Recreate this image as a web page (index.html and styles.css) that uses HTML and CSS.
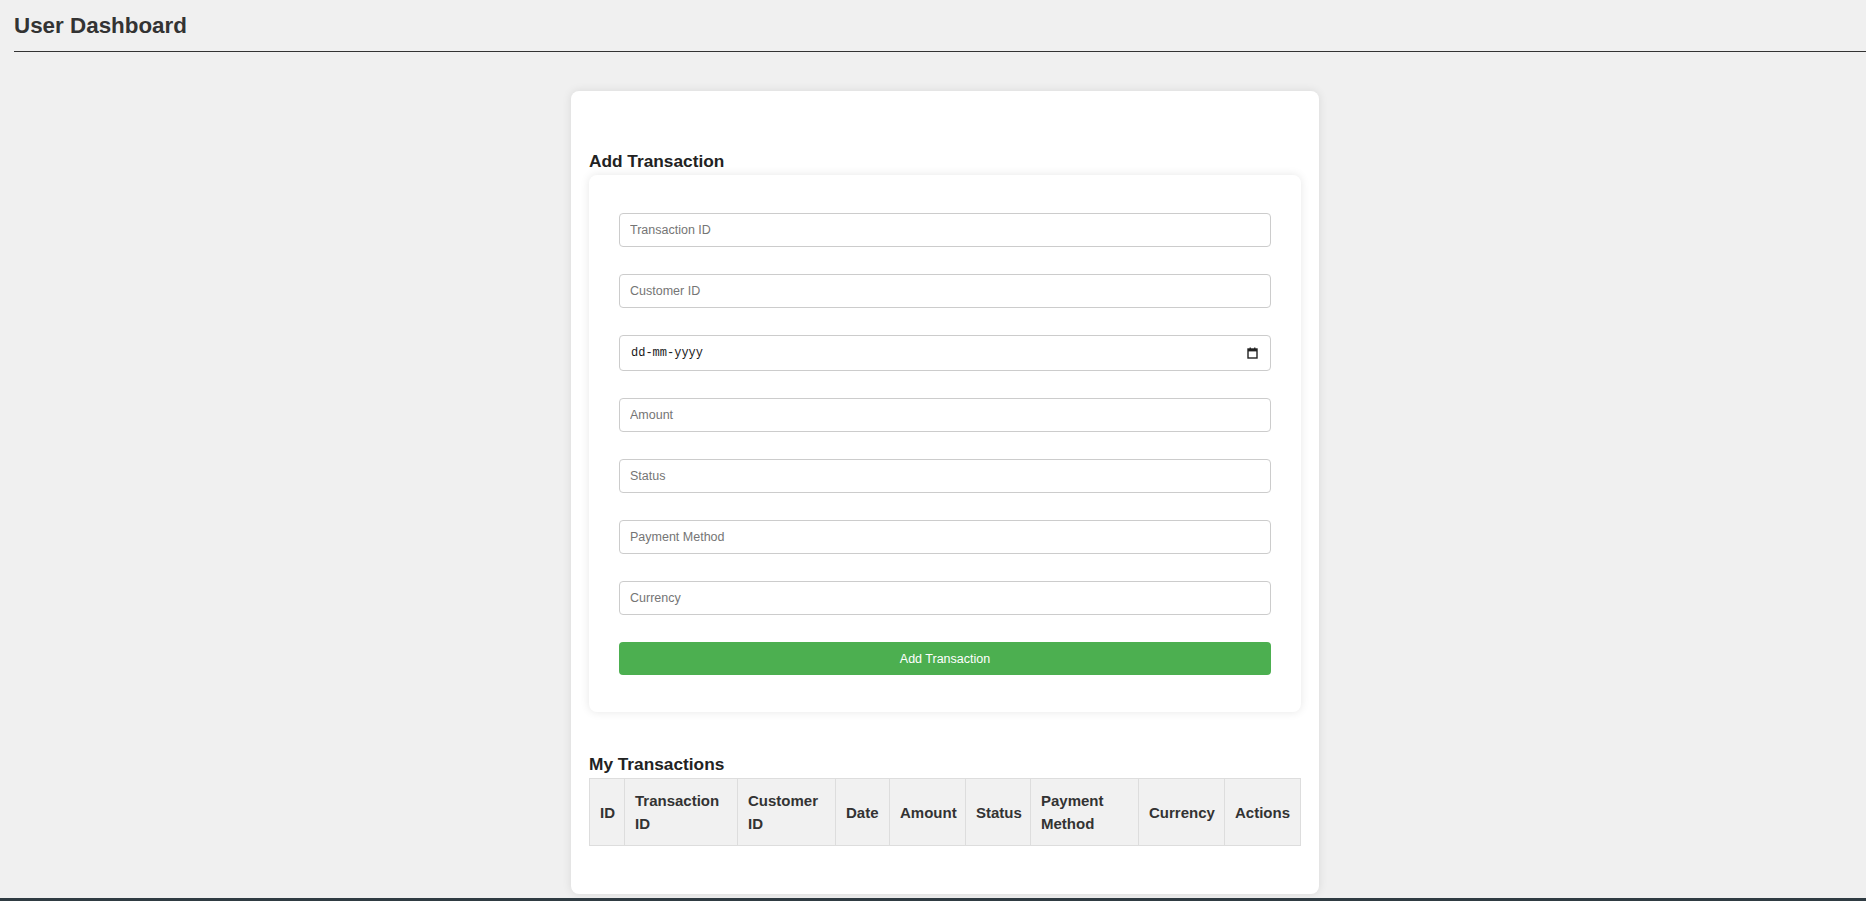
FILE: index.html
```html
<!DOCTYPE html>
<html lang="en">
<head>
<meta charset="utf-8">
<title>User Dashboard</title>
<link rel="stylesheet" href="styles.css">
</head>
<body>
<header class="page-header">
  <h1 class="page-title">User Dashboard</h1>
</header>
<main class="main">
  <section class="card">
    <h3 class="section-title">Add Transaction</h3>
    <form class="form-card">
      <input class="field" type="text" placeholder="Transaction ID">
      <input class="field" type="text" placeholder="Customer ID">
      <div class="field date-field">
        <span class="date-text">dd-mm-yyyy</span>
        <svg class="cal-icon" width="11" height="12" viewBox="0 0 11 12" aria-hidden="true">
          <rect x="1" y="2" width="9" height="9" fill="none" stroke="#222" stroke-width="1.4"/>
          <rect x="1" y="2" width="9" height="2.4" fill="#222"/>
          <rect x="2.6" y="0.5" width="1.3" height="2" fill="#222"/>
          <rect x="7.1" y="0.5" width="1.3" height="2" fill="#222"/>
        </svg>
      </div>
      <input class="field" type="text" placeholder="Amount">
      <input class="field" type="text" placeholder="Status">
      <input class="field" type="text" placeholder="Payment Method">
      <input class="field" type="text" placeholder="Currency">
      <button class="submit-btn" type="button">Add Transaction</button>
    </form>
    <h3 class="section-title section-title--table">My Transactions</h3>
    <table class="tx-table">
      <thead>
        <tr>
          <th class="c-id">ID</th>
          <th class="c-txid">Transaction ID</th>
          <th class="c-cust">Customer ID</th>
          <th class="c-date">Date</th>
          <th class="c-amount">Amount</th>
          <th class="c-status">Status</th>
          <th class="c-pay">Payment Method</th>
          <th class="c-cur">Currency</th>
          <th class="c-act">Actions</th>
        </tr>
      </thead>
      <tbody></tbody>
    </table>
  </section>
</main>
<footer class="page-footer"></footer>
</body>
</html>
```

FILE: styles.css
```css
* { box-sizing: border-box; }

html, body {
  margin: 0;
  padding: 0;
}

body {
  background: #f0f0f0;
  font-family: "Liberation Sans", Arial, sans-serif;
  color: #333;
  overflow: hidden;
}

.page-header {
  margin-left: 14px;
  padding: 13px 0 12px;
  border-bottom: 1px solid #333;
}

.page-title {
  margin: 0;
  font-size: 22.4px;
  line-height: 26px;
  font-weight: bold;
  color: #333;
}

.main {
  padding-left: 24px;
}

.card {
  width: 748px;
  margin: 39px auto 0;
  background: #fff;
  border-radius: 8px;
  box-shadow: 0 0 10px rgba(0, 0, 0, 0.1);
  padding: 60px 18px 48px;
}

.section-title {
  margin: 0 0 4px;
  font-size: 17.28px;
  line-height: 20px;
  font-weight: bold;
  color: #222;
}

.section-title--table {
  margin-top: 42px;
}

.form-card {
  display: flex;
  flex-direction: column;
  gap: 27px;
  background: #fff;
  border-radius: 8px;
  box-shadow: 0 0 10px rgba(0, 0, 0, 0.1);
  padding: 38px 30px 37px;
}

.field {
  display: block;
  width: 100%;
  height: 34px;
  margin: 0;
  padding: 0 10px;
  border: 1px solid #ccc;
  border-radius: 4px;
  background: #fff;
  font-family: "Liberation Sans", Arial, sans-serif;
  font-size: 12.5px;
  color: #222;
  outline: none;
}

.field::placeholder {
  color: #757575;
}

.date-field {
  height: 36px;
  display: flex;
  align-items: center;
  justify-content: space-between;
  padding: 0 12px 0 11px;
}

.date-text {
  font-family: "Liberation Mono", "DejaVu Sans Mono", monospace;
  font-size: 12px;
  color: #1a1a1a;
}

.cal-icon {
  display: block;
}

.submit-btn {
  display: block;
  width: 100%;
  height: 33px;
  margin: 0;
  border: none;
  border-radius: 4px;
  background: #4caf50;
  color: #fff;
  font-family: "Liberation Sans", Arial, sans-serif;
  font-size: 12.5px;
  cursor: pointer;
}

.tx-table {
  width: 100%;
  border-collapse: collapse;
  table-layout: fixed;
  border: 1px solid #ddd;
}

.tx-table th {
  background: #f1f1f1;
  border: 1px solid #ddd;
  padding: 10px;
  font-size: 15px;
  line-height: 23px;
  font-weight: bold;
  text-align: left;
  vertical-align: middle;
  color: #333;
}

.c-id { width: 35px; }
.c-txid { width: 113px; }
.c-cust { width: 98px; }
.c-date { width: 54px; }
.c-amount { width: 76px; }
.c-status { width: 65px; }
.c-pay { width: 108px; }
.c-cur { width: 86px; }
.c-act { width: 76px; }

.page-footer {
  margin-top: 4px;
  height: 40px;
  background: #2f3b42;
}
```
